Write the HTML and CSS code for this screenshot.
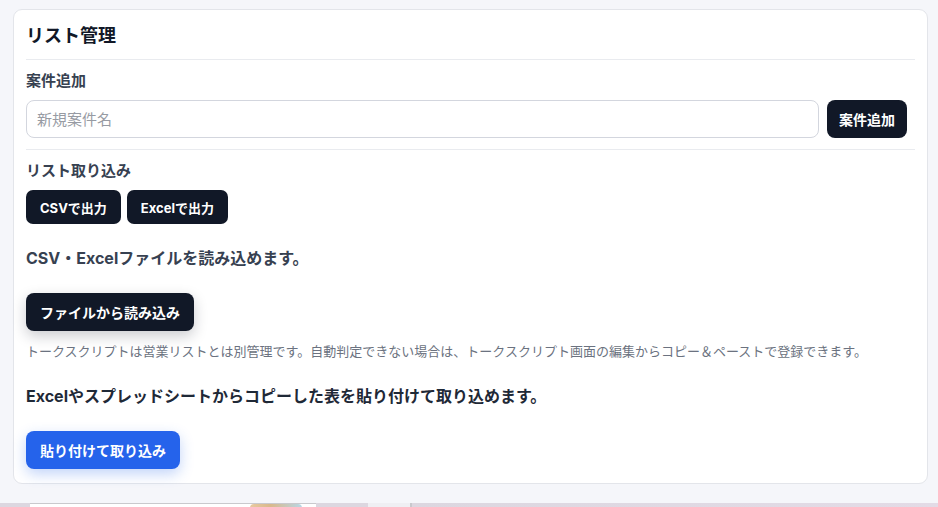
FILE: index.html
```html
<!DOCTYPE html>
<html lang="ja">
<head>
<meta charset="utf-8">
<title>リスト管理</title>
<link rel="stylesheet" href="styles.css">
</head>
<body>
<div class="page">
  <section class="card">
    <h1 class="card-title">リスト管理</h1>
    <div class="divider"></div>
    <h2 class="label">案件追加</h2>
    <div class="add-row">
      <input class="text-input" type="text" placeholder="新規案件名">
      <button class="btn btn-dark btn-md">案件追加</button>
    </div>
    <div class="divider"></div>
    <h2 class="label">リスト取り込み</h2>
    <div class="export-row">
      <button class="btn btn-dark btn-sm">CSVで出力</button>
      <button class="btn btn-dark btn-sm">Excelで出力</button>
    </div>
    <p class="lead lead-1">CSV・Excelファイルを読み込めます。</p>
    <div class="action"><button class="btn btn-dark btn-md btn-shadow">ファイルから読み込み</button></div>
    <p class="note">トークスクリプトは営業リストとは別管理です。自動判定できない場合は、トークスクリプト画面の編集からコピー＆ペーストで登録できます。</p>
    <p class="lead lead-2">Excelやスプレッドシートからコピーした表を貼り付けて取り込めます。</p>
    <div class="action"><button class="btn btn-blue btn-md">貼り付けて取り込み</button></div>
  </section>
</div>
<div class="strip">
  <div class="s-a"></div>
  <div class="s-b"><span class="blob"></span></div>
  <div class="s-c"></div>
  <div class="s-d"></div>
  <div class="s-e"></div>
</div>
</body>
</html>
```
FILE: styles.css
```css
html, body {
  margin: 0;
  padding: 0;
  height: 507px;
  overflow: hidden;
  background: #f5f6fa;
  font-family: "Inter", "Noto Sans CJK JP", sans-serif;
}
.page {
  padding: 9px 10px 0 13px;
  height: 503px;
  box-sizing: border-box;
}
.card {
  background: #ffffff;
  border: 1px solid #e3e5ea;
  border-radius: 9px;
  padding: 12px 12px 14px 12px;
  display: flex;
  flex-direction: column;
  align-items: stretch;
}
.card-title {
  margin: 0;
  font-size: 18px;
  line-height: 28px;
  font-weight: 700;
  color: #111827;
  padding-bottom: 9px;
}
.divider {
  height: 1px;
  background: #e9ebef;
}
.label {
  margin: 10px 0 0 0;
  font-size: 15px;
  line-height: 22px;
  font-weight: 700;
  color: #374151;
}
.add-row {
  display: flex;
  gap: 8px;
  margin: 8px 8px 11px 0;
}
.text-input {
  flex: 1;
  height: 38px;
  box-sizing: border-box;
  border: 1px solid #d3d6de;
  border-radius: 8px;
  padding: 0 10px;
  font-family: inherit;
  font-size: 15px;
  color: #111827;
  outline: none;
}
.text-input::placeholder {
  color: #979ba3;
}
.btn {
  border: none;
  font-family: inherit;
  font-weight: 700;
  color: #ffffff;
  cursor: pointer;
  white-space: nowrap;
}
.btn-dark { background: #111827; }
.btn-blue {
  background: #2563eb;
  box-shadow: 0 5px 14px rgba(37, 99, 235, 0.28);
}
.btn-md {
  height: 38px;
  padding: 0 12px;
  font-size: 14px;
  border-radius: 8px;
}
.btn-sm {
  height: 34px;
  padding: 0 14px;
  font-size: 13px;
  border-radius: 7px;
}
.btn-shadow {
  box-shadow: 0 5px 14px rgba(17, 24, 39, 0.22);
  padding: 0 14px;
}
.btn-blue.btn-md { padding: 0 14px; }
.export-row {
  display: flex;
  gap: 6px;
  margin-top: 8px;
}
.lead {
  margin: 0;
  font-size: 16px;
  line-height: 24px;
  font-weight: 700;
}
.lead-1 { margin-top: 22px; color: #374151; }
.lead-2 { margin-top: 23px; color: #1f2937; }
.action {
  display: flex;
  margin-top: 23px;
}
.note {
  margin: 10px 0 0 0;
  font-size: 13px;
  line-height: 20px;
  color: #6b7280;
}
.strip {
  display: flex;
  height: 4px;
}
.strip > div { height: 100%; box-sizing: border-box; }
.s-a { width: 30px; background: #dcd7e0; }
.s-b {
  width: 286px;
  background: #ffffff;
  border-top: 1px solid #c9c9cd;
  position: relative;
}
.blob {
  position: absolute;
  left: 220px;
  top: 0;
  width: 52px;
  height: 4px;
  border-radius: 26px 26px 0 0;
  background: linear-gradient(90deg, #e8c9a0, #d9b98c 40%, #b8d7e6);
}
.s-c { width: 52px; background: #dcd7e0; }
.s-d {
  width: 44px;
  background: #efeff3;
  border-right: 2px solid #c9c9cd;
}
.s-e { flex: 1; background: linear-gradient(90deg, #dcd7e0, #e3dbe6); }
```
